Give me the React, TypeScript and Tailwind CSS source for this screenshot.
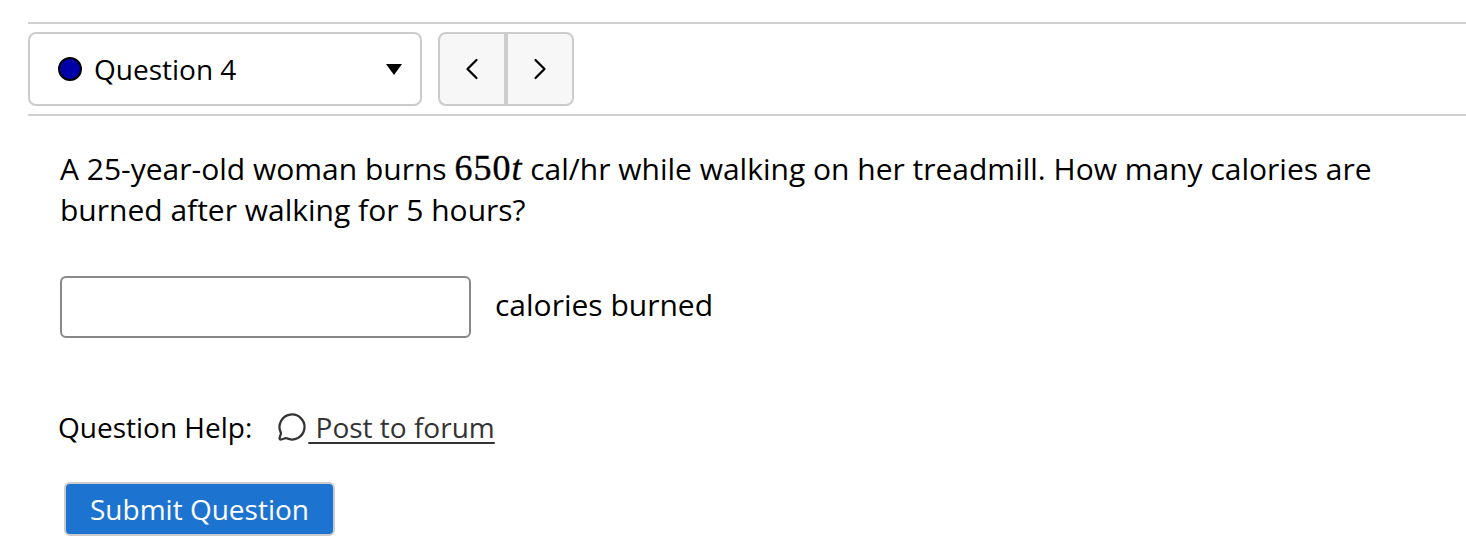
import React from 'react';
import { ChevronLeft, ChevronRight, MessageCircle } from 'lucide-react';

export default function App() {
  return (
    <div className="w-[1466px] h-[552px] overflow-hidden bg-white pt-[22px] pl-[28px] font-['Open_Sans',sans-serif] text-[30px] text-black">
      {/* Question nav */}
      <div className="border-t-2 border-b-2 border-[#d0d0d0] h-[94px] flex items-center gap-4">
        <div className="w-[394px] h-[74px] border-2 border-[#ccc] rounded-lg flex items-center pl-[28px] pr-[18px]">
          <span className="w-6 h-6 rounded-full bg-[#0000a8] border-2 border-black mr-3" />
          <span className="flex-1 text-[28px]">Question 4</span>
          <span className="w-0 h-0 border-l-[8px] border-r-[8px] border-t-[11px] border-l-transparent border-r-transparent border-t-black" />
        </div>
        <div className="h-[74px] w-[136px] flex border-2 border-[#ccc] rounded-lg bg-[#f7f7f7]">
          <div className="flex-1 flex items-center justify-center border-r-4 border-[#ccc]"><ChevronLeft size={36} strokeWidth={1.5} /></div>
          <div className="flex-1 flex items-center justify-center"><ChevronRight size={36} strokeWidth={1.5} /></div>
        </div>
      </div>

      <div className="pl-[32px] pt-[32px]">
        <p className="w-[1340px] leading-[41px]">A 25-year-old woman burns <span className="font-['Liberation_Serif',serif] text-[36px] leading-[30px] tracking-[1px] [-webkit-text-stroke:0.4px_black]">650<i>t</i></span> cal/hr while walking on her treadmill. How many calories are burned after walking for 5 hours?</p>
        <div className="flex mt-[46px] gap-6">
          <div className="w-[411px] h-[62px] border-2 border-[#888] rounded-md" />
          <span className="leading-[58px]">calories burned</span>
        </div>
        <div className="flex items-center mt-[67px] -ml-[2px] h-[44px] text-[28px]">
          <span>Question Help:</span>
          <MessageCircle size={30} strokeWidth={1.8} className="ml-[25px] text-[#333]" />
          <a className="underline text-[#333] whitespace-pre decoration-2 underline-offset-4 ml-[1px]"> Post to forum</a>
        </div>
        <button className="block mt-[33px] ml-[4px] w-[271px] h-[54px] bg-[#1d74d0] border-2 border-[#ccc] rounded-md text-white text-[28px] leading-none">Submit Question</button>
      </div>
    </div>
  );
}
